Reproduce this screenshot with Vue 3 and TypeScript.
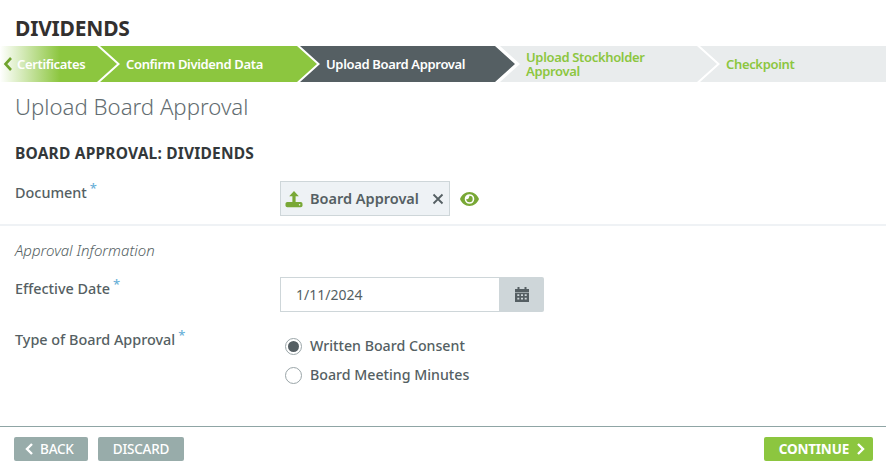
<script setup lang="ts">
interface Step { label: string; kind: string }
const steps: Step[] = [
  { label: 'Certificates', kind: 'first' },
  { label: 'Confirm Dividend Data', kind: 'done' },
  { label: 'Upload Board Approval', kind: 'active' },
  { label: 'Upload Stockholder Approval', kind: 'todo' },
  { label: 'Checkpoint', kind: 'todo last' },
]
</script>

<template>
  <div class="page">
    <h1 class="title">DIVIDENDS</h1>
    <nav class="stepper">
      <div v-for="s in steps" :key="s.label" class="step" :class="s.kind">
        <svg v-if="s.kind === 'first'" class="back-chev" width="10" height="16" viewBox="0 0 10 16"><path d="M8 2 2.500 8 8 14" fill="none" stroke="#6fa32c" stroke-width="2.600"/></svg>
        <span>{{ s.label }}</span>
      </div>
    </nav>
    <h2 class="subtitle">Upload Board Approval</h2>
    <h3 class="section">BOARD APPROVAL: DIVIDENDS</h3>

    <div class="row doc-row">
      <div class="label">Document<span class="req">*</span></div>
      <div class="doc-field">
        <div class="chip">
          <svg width="18" height="18" viewBox="0 0 18 18"><path d="M9 1 13.800 6.200H10.600V12.600H7.400V6.200H4.200Z" fill="#79a836"/><rect x="0.500" y="12" width="17" height="5.200" rx="1.800" fill="#79a836"/><circle cx="14.600" cy="14.800" r=".8" fill="#eef2f5"/></svg>
          <span class="chip-text">Board Approval</span>
          <svg class="chip-x" width="12" height="12" viewBox="0 0 12 12"><path d="M1.500 1.500 10.500 10.500M10.500 1.500 1.500 10.500" stroke="#555f63" stroke-width="1.800" fill="none"/></svg>
        </div>
        <svg class="eye" width="19" height="14" viewBox="0 0 19 14"><path fill-rule="evenodd" d="M9.500 0C14 0 17.400 3.200 19 7 17.400 10.800 14 14 9.500 14S1.600 10.800 0 7C1.600 3.200 5 0 9.500 0ZM9.500 2.200A4.800 4.800 0 1 0 9.500 11.800 4.800 4.800 0 0 0 9.500 2.200Z" fill="#79a836"/><path d="M9.500 3.800A3.200 3.200 0 1 1 6.300 7C7.500 7.500 9 7 9.500 3.800Z" fill="#79a836"/></svg>
      </div>
    </div>

    <hr class="divider" />
    <div class="info">Approval Information</div>

    <div class="row date-row">
      <div class="label">Effective Date<span class="req">*</span></div>
      <div class="date">
        <div class="date-value">1/11/2024</div>
        <div class="date-btn">
          <svg width="14" height="15" viewBox="0 0 14 15"><path fill-rule="evenodd" d="M2.500 0H4.500V2H9.500V0H11.500V2H14V15H0V2H2.500ZM2.300 7.300V9H4.300V7.300ZM6 7.300V9H8V7.300ZM9.700 7.300V9H11.700V7.300ZM2.300 10.700V12.400H4.300V10.700ZM6 10.700V12.400H8V10.700ZM9.700 10.700V12.400H11.700V10.700Z" fill="#555f63"/><rect x="0" y="5.400" width="14" height=".6" fill="#ced6d9"/></svg>
        </div>
      </div>
    </div>

    <div class="row type-row">
      <div class="label">Type of Board Approval<span class="req">*</span></div>
      <div class="radios">
        <label class="radio"><span class="dot on"></span>Written Board Consent</label>
        <label class="radio"><span class="dot"></span>Board Meeting Minutes</label>
      </div>
    </div>

    <footer class="footer">
      <div class="left">
        <button class="btn grey back">
          <svg width="9" height="12" viewBox="0 0 9 12"><path d="M7 1 2 6l5 5" fill="none" stroke="#fff" stroke-width="2.400"/></svg>
          BACK
        </button>
        <button class="btn grey">DISCARD</button>
      </div>
      <button class="btn green">
        CONTINUE
        <svg width="9" height="12" viewBox="0 0 9 12"><path d="M2 1l5 5-5 5" fill="none" stroke="#fff" stroke-width="2.400"/></svg>
      </button>
    </footer>
  </div>
</template>

<style>
html, body { margin: 0; background: #fff; }
</style>

<style scoped>
.page {
  width: 886px;
  height: 469px;
  display: flex;
  flex-direction: column;
  font-family: "Noto Sans", "Open Sans", sans-serif;
  color: #555f63;
  overflow: hidden;
  box-sizing: border-box;
}
.title {
  margin: 0;
  padding: 15px 0 0 15px;
  height: 31px;
  font-size: 21px;
  line-height: 26px;
  font-weight: 700;
  letter-spacing: -0.2px;
  color: #33302f;
  box-sizing: content-box;
}
.stepper { display: flex; height: 36px; }
.step {
  height: 36px;
  display: flex;
  align-items: center;
  box-sizing: border-box;
  padding-left: 26px;
  padding-right: 26px;
  font-size: 13px;
  line-height: 14px;
  font-weight: 600;
  letter-spacing: -0.34px;
  margin-left: -17px;
  width: 217px;
  flex: none;
  clip-path: polygon(0 0, calc(100% - 20px) 0, 100% 50%, calc(100% - 20px) 100%, 0 100%, 20px 50%);
}
.step.first {
  width: 117px;
  margin-left: 0;
  padding-left: 17px;
  position: relative;
  color: #fff;
  background: linear-gradient(90deg, #fff 0, #8cc63f 60px);
  clip-path: polygon(0 0, 97px 0, 100% 50%, 97px 100%, 0 100%);
}
.back-chev { position: absolute; left: 3px; top: 10px; }
.step.done { background: #8cc63f; color: #fff; }
.step.active { background: #555f63; color: #fff; width: 215px; }
.step.todo { background: #e9eced; color: #8cc63f; }
.step.active + .step.todo { margin-left: -15px; }
.step.last {
  flex: 1;
  width: auto;
  margin-left: -17px;
  clip-path: polygon(0 0, 100% 0, 100% 100%, 0 100%, 20px 50%);
}
.subtitle {
  margin: 11px 0 0;
  padding-left: 15px;
  font-size: 22.200px;
  line-height: 28px;
  font-weight: 300;
  color: #636d71;
}
.section {
  margin: 22px 0 0;
  padding-left: 15px;
  font-size: 15.500px;
  line-height: 20px;
  font-weight: 700;
  letter-spacing: 0.2px;
  color: #33383a;
}
.row { display: flex; padding-left: 15px; }
.label {
  width: 265px;
  flex: none;
  padding-top: 2px;
  font-size: 14.400px;
  line-height: 20px;
  font-weight: 500;
  color: #555f63;
}
.req {
  color: #6ab0d8;
  font-size: 13px;
  margin-left: 3px;
  position: relative;
  top: -5px;
}
.doc-row { margin-top: 18px; height: 35px; }
.doc-field { display: flex; align-items: center; gap: 10px; height: 35px; }
.chip {
  width: 170px;
  height: 35px;
  box-sizing: border-box;
  border: 1px solid #ced6d9;
  background: #eef2f5;
  display: flex;
  align-items: center;
  padding-left: 4px;
}
.chip-text { font-size: 14.500px; font-weight: 600; margin-left: 7px; padding-bottom: 2px; white-space: nowrap; flex: 1; }
.chip-x { margin-right: 5px; }
.divider { margin: 8px 0 0; border: 0; height: 2px; background: #eff2f5; }
.info {
  margin-top: 14px;
  padding-left: 15px;
  font-size: 15px;
  line-height: 20px;
  font-style: italic;
  font-weight: 300;
}
.date-row { margin-top: 17px; height: 35px; }
.date { display: flex; width: 264px; height: 35px; }
.date-value {
  flex: 1;
  box-sizing: border-box;
  border: 1px solid #ced6d9;
  border-right: 0;
  padding: 0 15px;
  font-size: 14px;
  line-height: 33px;
}
.date-btn {
  width: 45px;
  background: #ced6d9;
  border-radius: 0 2px 2px 0;
  display: flex;
  align-items: center;
  justify-content: center;
}
.type-row { margin-top: 17px; }
.type-row .label { padding-top: 1px; }
.radios { display: flex; flex-direction: column; gap: 9px; padding-top: 7px; padding-left: 5px; }
.radio {
  display: flex;
  align-items: center;
  font-size: 14.200px;
  line-height: 20px;
  font-weight: 500;
  color: #555f63;
}
.dot {
  width: 15px;
  height: 15px;
  border: 1px solid #9aa5a8;
  border-radius: 50%;
  margin-right: 8px;
  background: #fff;
  position: relative;
  flex: none;
}
.dot.on::after {
  content: "";
  position: absolute;
  inset: 2px;
  border-radius: 50%;
  background: #555f63;
}
.footer {
  margin-top: auto;
  height: 43px;
  box-sizing: border-box;
  border-top: 1px solid #8fa5a5;
  display: flex;
  justify-content: space-between;
  align-items: flex-start;
  padding: 10px 13px 0 14px;
}
.left { display: flex; gap: 10px; }
.btn {
  height: 24px;
  border: 0;
  border-radius: 2px;
  color: #fff;
  font-family: inherit;
  font-size: 13.500px;
  line-height: 24px;
  padding: 0 15px;
  display: flex;
  align-items: center;
  gap: 6px;
  letter-spacing: -0.2px;
}
.back { padding: 0 14px 0 11px; }
.grey { background: #98acaa; font-weight: 500; }
.green { background: #8cc63f; font-weight: 700; padding-right: 8px; gap: 7px; }
</style>
